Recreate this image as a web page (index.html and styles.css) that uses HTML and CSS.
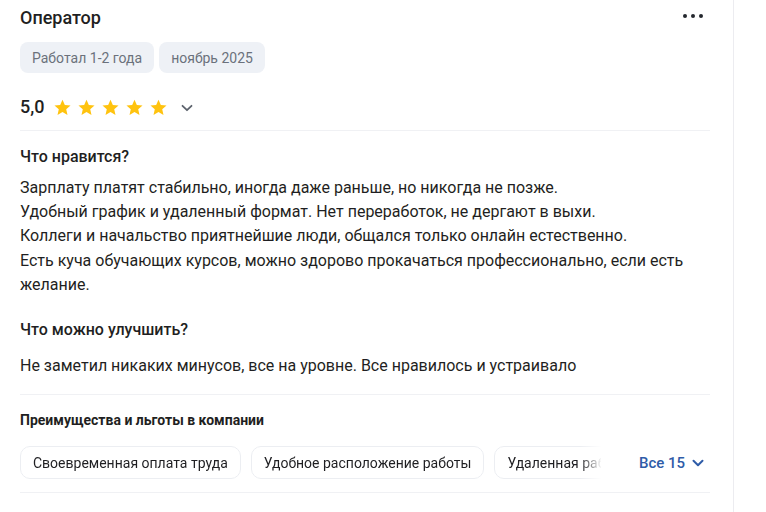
FILE: index.html
```html
<!DOCTYPE html>
<html lang="ru">
<head>
<meta charset="utf-8">
<link rel="stylesheet" href="styles.css">
</head>
<body>
<div class="page">
  <main class="review">
    <div class="head">
      <h2 class="title">Оператор</h2>
      <svg class="more" width="20" height="4" viewBox="0 0 20 4"><circle cx="2" cy="2" r="2"/><circle cx="10" cy="2" r="2"/><circle cx="18" cy="2" r="2"/></svg>
    </div>
    <div class="tags">
      <span class="tag">Работал 1-2 года</span>
      <span class="tag">ноябрь 2025</span>
    </div>
    <div class="rating">
      <span class="score">5,0</span>
      <span class="stars">
        <svg viewBox="0 0 24 24"><path d="M12 2.2l2.95 6.6 7.2.7-5.45 4.8 1.6 7.1L12 17.7l-6.3 3.7 1.6-7.1L1.85 9.5l7.2-.7z"/></svg>
        <svg viewBox="0 0 24 24"><path d="M12 2.2l2.95 6.6 7.2.7-5.45 4.8 1.6 7.1L12 17.7l-6.3 3.7 1.6-7.1L1.85 9.5l7.2-.7z"/></svg>
        <svg viewBox="0 0 24 24"><path d="M12 2.2l2.95 6.6 7.2.7-5.45 4.8 1.6 7.1L12 17.7l-6.3 3.7 1.6-7.1L1.85 9.5l7.2-.7z"/></svg>
        <svg viewBox="0 0 24 24"><path d="M12 2.2l2.95 6.6 7.2.7-5.45 4.8 1.6 7.1L12 17.7l-6.3 3.7 1.6-7.1L1.85 9.5l7.2-.7z"/></svg>
        <svg viewBox="0 0 24 24"><path d="M12 2.2l2.95 6.6 7.2.7-5.45 4.8 1.6 7.1L12 17.7l-6.3 3.7 1.6-7.1L1.85 9.5l7.2-.7z"/></svg>
      </span>
      <svg class="chev" width="12" height="8" viewBox="0 0 12 8"><path d="M1.5 1.8L6 6.2l4.5-4.4" fill="none" stroke="currentColor" stroke-width="1.8" stroke-linecap="round" stroke-linejoin="round"/></svg>
    </div>
    <hr class="divider">
    <h3 class="q q-first">Что нравится?</h3>
    <p class="text">Зарплату платят стабильно, иногда даже раньше, но никогда не позже.<br>Удобный график и удаленный формат. Нет переработок, не дергают в выхи.<br>Коллеги и начальство приятнейшие люди, общался только онлайн естественно.<br>Есть куча обучающих курсов, можно здорово прокачаться профессионально, если есть желание.</p>
    <h3 class="q q-second">Что можно улучшить?</h3>
    <p class="text text-second">Не заметил никаких минусов, все на уровне. Все нравилось и устраивало</p>
    <hr class="divider divider-2">
    <h4 class="perks-title">Преимущества и льготы в компании</h4>
    <div class="perks">
      <div class="chips">
        <span class="chip">Своевременная оплата труда</span>
        <span class="chip">Удобное расположение работы</span>
        <span class="chip">Удаленная работа</span>
      </div>
      <a class="all">Все 15
        <svg width="12" height="8" viewBox="0 0 12 8"><path d="M1.5 1.8L6 6.2l4.5-4.4" fill="none" stroke="currentColor" stroke-width="2" stroke-linecap="round" stroke-linejoin="round"/></svg>
      </a>
    </div>
    <hr class="divider divider-3">
  </main>
</div>
</body>
</html>
```
FILE: styles.css
```css
* { box-sizing: border-box; }
html, body { margin: 0; padding: 0; background: #fff; }
body {
  font-family: Roboto, "Noto Sans", Arial, sans-serif;
  color: #1f1f22;
  width: 766px;
  height: 512px;
  overflow: hidden;
}
.page { display: flex; height: 512px; }
.review {
  width: 734px;
  padding: 6px 24px 0 20px;
  border-right: 1px solid #ececf0;
}
.head {
  display: flex;
  align-items: center;
  justify-content: space-between;
  height: 24px;
}
.title {
  margin: 0;
  font-size: 18px;
  font-weight: 500;
  line-height: 24px;
  color: #1f1f22;
}
.more { fill: #24272e; margin-right: 6px; margin-top: -4px; }
.tags { display: flex; gap: 5px; margin-top: 12px; }
.tag {
  height: 31px;
  padding: 0 12px;
  display: inline-flex;
  align-items: center;
  background: #eef1f6;
  border-radius: 8px;
  font-size: 14px;
  color: #6b717c;
}
.rating {
  display: flex;
  align-items: center;
  height: 24px;
  margin-top: 22px;
}
.score { font-size: 18px; font-weight: 500; line-height: 24px; margin-right: 8px; }
.stars { display: flex; gap: 5px; }
.stars svg { width: 19px; height: 19px; fill: #ffc30f; }
.chev { color: #5d636d; margin-left: 13px; margin-top: 1px; }
.divider {
  border: 0;
  border-top: 1px solid #f0f1f4;
  margin: 11px 0 0;
  width: 690px;
}
.q {
  margin: 16px 0 0;
  font-size: 16px;
  font-weight: 500;
  line-height: 20px;
}
.q-second { margin-top: 23px; }
.text {
  margin: 9px 0 0;
  font-size: 16px;
  line-height: 24.2px;
  width: 690px;
  color: #1f1f22;
}
.text-second { margin-top: 14px; }
.divider-2 { margin-top: 16px; }
.perks-title {
  margin: 15px 0 0;
  font-size: 14px;
  font-weight: 700;
  line-height: 20px;
}
.perks {
  display: flex;
  align-items: center;
  margin-top: 16px;
  width: 690px;
}
.chips {
  display: flex;
  gap: 10px;
  width: 581px;
  overflow: hidden;
  -webkit-mask-image: linear-gradient(to right, #000 560px, transparent 582px);
  mask-image: linear-gradient(to right, #000 560px, transparent 582px);
}
.chip {
  flex: none;
  height: 33px;
  padding: 0 12px;
  display: inline-flex;
  align-items: center;
  border: 1px solid #eceef2;
  border-radius: 10px;
  font-size: 14px;
  color: #1f1f22;
  white-space: nowrap;
}
.all {
  margin-left: 38px;
  display: flex;
  align-items: center;
  gap: 7px;
  color: #2f5ca8;
  font-size: 15px;
  font-weight: 500;
}
.divider-3 { margin-top: 13px; }
```
